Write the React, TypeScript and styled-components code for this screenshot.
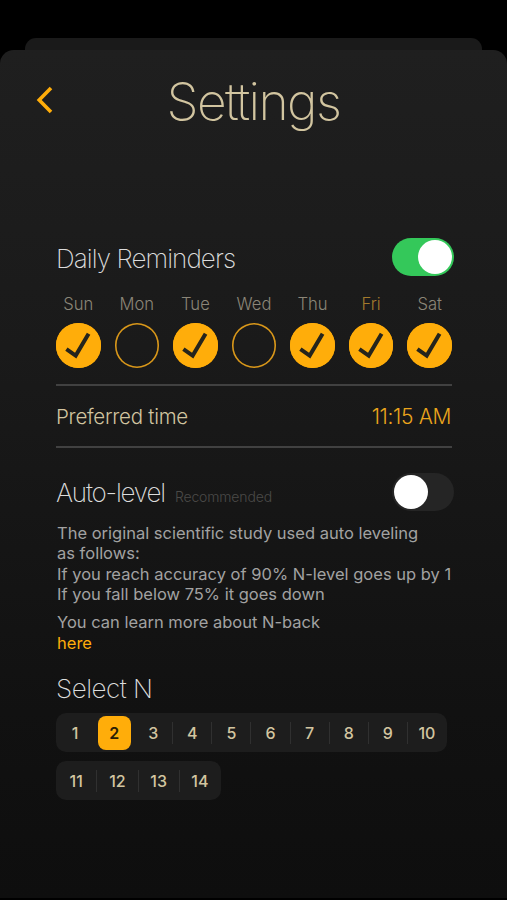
import React from "react";
import styled, { createGlobalStyle } from "styled-components";

const amber = "#ffad0a";
const sand = "#d2c5a0";

const GlobalStyle = createGlobalStyle`
  * { box-sizing: border-box; }
  body { margin: 0; background: #000; font-family: Inter, "Liberation Sans", sans-serif; }
`;

const Screen = styled.div`
  display: flex;
  flex-direction: column;
  width: 507px;
  height: 900px;
  padding-top: 38px;
  overflow: hidden;
  background: #000;
`;

const BackSheet = styled.div`
  flex: none;
  height: 12px;
  margin: 0 25px;
  border-radius: 11px 11px 0 0;
  background: #1a1a1a;
`;

const Sheet = styled.main`
  flex: none;
  display: flex;
  flex-direction: column;
  height: 848px;
  border-radius: 14px 14px 0 0;
  background: linear-gradient(#1f1f1f, #1a1a1a 35%, #111 78%, #0e0e0e);
`;

const Header = styled.header`
  display: grid;
  grid-template-columns: 70px 1fr 70px;
  align-items: center;
  height: 101px;
`;

const BackButton = styled.button`
  display: flex;
  padding: 0 0 1px 35px;
  border: 0;
  background: none;
`;

const Title = styled.h1<{ $track: number }>`
  margin: 0;
  color: ${sand};
  text-align: center;
  font-size: 51.5px;
  font-weight: 200;
  line-height: 60px;
  white-space: nowrap;
  letter-spacing: ${(p) => p.$track}px;
`;

const Content = styled.div`
  display: flex;
  flex-direction: column;
  padding: 87px 55px 0 56px;
`;

const SectionHead = styled.div`
  display: flex;
  align-items: center;
  justify-content: space-between;
  height: 38px;
  margin-right: -2px;
`;

const Heading = styled.h2<{ $track: number }>`
  margin: 0;
  padding-top: 3px;
  color: #dcdcdc;
  font-size: 26px;
  font-weight: 200;
  line-height: 38px;
  white-space: nowrap;
  letter-spacing: ${(p) => p.$track}px;
`;

const Hint = styled.small`
  margin-left: 10px;
  color: #4b4a48;
  font-size: 14px;
  font-weight: 300;
  letter-spacing: -0.15px;
`;

const Switch = styled.button<{ $on: boolean }>`
  display: flex;
  align-items: center;
  justify-content: ${(p) => (p.$on ? "flex-end" : "flex-start")};
  width: 62px;
  height: 38px;
  padding: 0 2px;
  border: 0;
  border-radius: 19px;
  background: ${(p) => (p.$on ? "#34c85a" : "#252525")};
`;

const Knob = styled.span`
  width: 34px;
  height: 34px;
  border-radius: 50%;
  background: #fff;
`;

const Days = styled.div`
  display: flex;
  justify-content: space-between;
  margin-top: 17px;
`;

const Day = styled.div`
  display: flex;
  flex-direction: column;
  align-items: center;
  width: 44.5px;
`;

const DayName = styled.span<{ $today?: boolean }>`
  height: 30px;
  color: ${(p) => (p.$today ? "#a37a2c" : "#8b8678")};
  font-size: 16.6px;
  font-weight: 300;
  line-height: 22px;
`;

const Dot = styled.span<{ $on: boolean }>`
  display: flex;
  width: 44.5px;
  height: 44.5px;
  border-radius: 50%;
  background: ${(p) => (p.$on ? amber : "transparent")};
  box-shadow: inset 0 0 0 1.6px ${(p) => (p.$on ? amber : "#d8971a")};
`;

const TimeRow = styled.div`
  display: flex;
  align-items: center;
  justify-content: space-between;
  height: 64px;
  margin-top: 16.5px;
  border: solid #414141;
  border-width: 2px 0;
`;

const TimeLabel = styled.span`
  color: ${sand};
  font-size: 20.5px;
  font-weight: 300;
  letter-spacing: -0.25px;
`;

const TimeValue = styled.span`
  padding-right: 1px;
  color: #eba51c;
  font-size: 21px;
  font-weight: 300;
  letter-spacing: -0.35px;
`;

const LevelHead = styled(SectionHead)`
  margin-top: 25px;
`;

const HeadGroup = styled.div`
  display: flex;
  align-items: baseline;
  margin-top: -1px;
`;

const Copy = styled.p<{ $track?: number }>`
  margin: 12px -10px 0 1px;
  color: #a2a2a2;
  font-size: 16.5px;
  line-height: 20.4px;
  white-space: nowrap;
  & + & { margin-top: 7.5px; }
`;

const Link = styled.a`
  color: ${amber};
`;

const SelectHeading = styled(Heading)`
  margin: 14.5px 0 5px;
`;

const Segments = styled.div<{ $width: number }>`
  display: flex;
  align-items: center;
  width: ${(p) => p.$width}px;
  height: 39px;
  margin-bottom: 9px;
  border-radius: 10px;
  background: #1d1d1d;
`;

const Segment = styled.button<{ $line: boolean }>`
  flex: 1;
  display: flex;
  align-items: center;
  justify-content: center;
  height: 22px;
  padding: 0;
  border: 0;
  border-right: 1px solid ${(p) => (p.$line ? "#303030" : "transparent")};
  background: none;
  color: ${sand};
  font: 500 16px Inter, sans-serif;
`;

const Selected = styled.span`
  flex: none;
  width: 33px;
  height: 34px;
  border-radius: 8px;
  background: ${amber};
  color: #2a1d04;
  font-weight: 600;
  line-height: 34px;
`;

const week = [
  { name: "Sun", on: true },
  { name: "Mon", on: false },
  { name: "Tue", on: true },
  { name: "Wed", on: false },
  { name: "Thu", on: true },
  { name: "Fri", on: true, today: true },
  { name: "Sat", on: true },
];

function Picker({ values, selected, width }: { values: number[]; selected: number; width: number }) {
  return (
    <Segments $width={width}>
      {values.map((n, i) => (
        <Segment key={n} $line={i < values.length - 1 && n !== selected && n + 1 !== selected}>
          {n === selected ? <Selected>{n}</Selected> : n}
        </Segment>
      ))}
    </Segments>
  );
}

export default function App() {
  return (
    <>
      <GlobalStyle />
      <Screen>
        <BackSheet />
        <Sheet>
          <Header>
            <BackButton aria-label="Back">
              <svg width="20" height="28" viewBox="0 0 20 28" fill="none" stroke={amber} strokeWidth="3.6">
                <path d="M16 2 4.2 14 16 26" />
              </svg>
            </BackButton>
            <Title $track={-1.6}>Settings</Title>
          </Header>
          <Content>
            <SectionHead>
              <Heading $track={-0.92}>Daily Reminders</Heading>
              <Switch $on aria-label="Daily Reminders"><Knob /></Switch>
            </SectionHead>
            <Days>
              {week.map((d) => (
                <Day key={d.name}>
                  <DayName $today={d.today}>{d.name}</DayName>
                  <Dot $on={d.on}>
                    {d.on && (
                      <svg width="44" height="44" viewBox="0 0 44 44" fill="none" stroke="#25241c" strokeWidth="4">
                        <path d="M10.4 26.2 19.7 32.6 32.6 10.8" />
                      </svg>
                    )}
                  </Dot>
                </Day>
              ))}
            </Days>
            <TimeRow>
              <TimeLabel>Preferred time</TimeLabel>
              <TimeValue>11:15 AM</TimeValue>
            </TimeRow>
            <LevelHead>
              <HeadGroup>
                <Heading $track={-1.2}>Auto-level</Heading>
                <Hint>Recommended</Hint>
              </HeadGroup>
              <Switch $on={false} aria-label="Auto-level"><Knob /></Switch>
            </LevelHead>
            <Copy>
              The original scientific study used auto leveling<br />
              as follows:<br />
              If you reach accuracy of 90% N-level goes up by 1<br />
              If you fall below 75% it goes down
            </Copy>
            <Copy>
              You can learn more about N-back<br />
              <Link>here</Link>
            </Copy>
            <SelectHeading $track={-0.5}>Select N</SelectHeading>
            <Picker values={[1, 2, 3, 4, 5, 6, 7, 8, 9, 10]} selected={2} width={391} />
            <Picker values={[11, 12, 13, 14]} selected={2} width={165} />
          </Content>
        </Sheet>
      </Screen>
    </>
  );
}
